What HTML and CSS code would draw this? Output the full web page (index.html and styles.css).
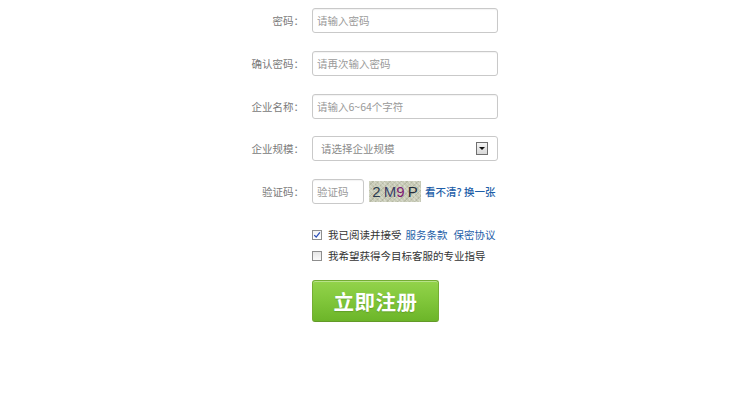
FILE: index.html
```html
<!DOCTYPE html>
<html lang="zh">
<head>
<meta charset="utf-8">
<title>注册</title>
<link rel="stylesheet" href="styles.css">
</head>
<body>
<form class="form">
  <div class="row">
    <label class="label">密码：</label>
    <input class="field" type="text" placeholder="请输入密码">
  </div>
  <div class="row">
    <label class="label">确认密码：</label>
    <input class="field" type="text" placeholder="请再次输入密码">
  </div>
  <div class="row">
    <label class="label">企业名称：</label>
    <input class="field" type="text" placeholder="请输入6~64个字符">
  </div>
  <div class="row">
    <label class="label">企业规模：</label>
    <div class="select">
      <span class="select-text">请选择企业规模</span>
      <span class="select-btn"><span class="select-arrow"></span></span>
    </div>
  </div>
  <div class="row">
    <label class="label">验证码：</label>
    <div class="captcha-line">
      <input class="field field-small" type="text" placeholder="验证码">
      <span class="captcha"><span class="c1">2</span> <span class="c2">M</span><span class="c3">9</span> <span class="c4">P</span></span>
      <a class="link link-bold" href="#">看不清? 换一张</a>
    </div>
  </div>
  <div class="checks">
    <div class="check-row">
      <span class="box checked"><svg viewBox="0 0 10 10" width="8" height="8"><path d="M1.5 5.2 L4 7.6 L8.6 1.8" fill="none" stroke="#2b4fb8" stroke-width="1.6"/></svg></span>
      <span class="check-text">我已阅读并接受</span>
      <a class="link" href="#">服务条款</a>
      <a class="link link-gap" href="#">保密协议</a>
    </div>
    <div class="check-row">
      <span class="box"></span>
      <span class="check-text">我希望获得今目标客服的专业指导</span>
    </div>
    <button class="submit" type="button">立即注册</button>
  </div>
</form>
</body>
</html>
```

FILE: styles.css
```css
html, body {
  margin: 0;
  padding: 0;
  background: #ffffff;
}
body {
  font-family: "Noto Sans CJK SC", "Liberation Sans", sans-serif;
  font-size: 10.5px;
  color: #333;
}
.form {
  display: flex;
  flex-direction: column;
  gap: 17.75px;
  padding-top: 8px;
}
.row {
  display: grid;
  grid-template-columns: 304px auto;
  column-gap: 8px;
  align-items: center;
  height: 25px;
}
.label {
  text-align: right;
  color: #7a7a7a;
  font-size: 10.5px;
}
.field {
  box-sizing: border-box;
  width: 186px;
  height: 25px;
  border: 1px solid #c9c9c9;
  border-radius: 3px;
  padding: 0 4px;
  font-family: inherit;
  font-size: 10.5px;
  color: #333;
  box-shadow: inset 0 1px 1px rgba(0,0,0,0.05);
  outline: none;
}
.field::placeholder {
  color: #9a9a9a;
}
.field-small {
  width: 52px;
}
.select {
  box-sizing: border-box;
  width: 186px;
  height: 25px;
  border: 1px solid #c9c9c9;
  border-radius: 3px;
  display: flex;
  align-items: center;
  justify-content: space-between;
  padding: 0 9px 0 8px;
}
.select-text {
  color: #8a8a8a;
}
.select-btn {
  box-sizing: border-box;
  width: 12px;
  height: 13px;
  border: 1px solid #6f6f6f;
  background: linear-gradient(#f4f4f4, #d8d8d8);
  display: flex;
  align-items: center;
  justify-content: center;
}
.select-arrow {
  width: 0;
  height: 0;
  border-left: 3px solid transparent;
  border-right: 3px solid transparent;
  border-top: 3px solid #111;
}
.captcha-line {
  display: flex;
  align-items: center;
}
.captcha {
  margin-left: 5px;
  width: 52px;
  height: 21px;
  box-sizing: border-box;
  display: block;
  text-align: center;
  line-height: 21px;
  font-family: "Liberation Sans", sans-serif;
  font-size: 15px;
  word-spacing: -1px;
  background-color: #c7cab6;
  background-image:
    repeating-linear-gradient(45deg, rgba(255,255,255,0.22) 0 1px, transparent 1px 3px),
    repeating-linear-gradient(-45deg, rgba(90,95,70,0.16) 0 1px, transparent 1px 4px),
    repeating-linear-gradient(90deg, rgba(255,255,240,0.15) 0 1px, transparent 1px 5px);
  white-space: pre;
}
.c1 { color: #2b3a4c; }
.c2 { color: #3a3f66; }
.c3 { color: #7d1a74; }
.c4 { color: #242e3c; }
.link {
  color: #1e5ea8;
  text-decoration: none;
}
.link-bold {
  margin-left: 4px;
  font-weight: 500;
}
.checks {
  display: flex;
  flex-direction: column;
  padding-left: 312px;
  margin-top: 6px;
}
.check-row {
  display: flex;
  align-items: center;
  height: 14px;
  margin-bottom: 7px;
}
.box {
  box-sizing: border-box;
  width: 10px;
  height: 10px;
  border: 1px solid #8e8e8e;
  background: linear-gradient(#e6e6e6, #fafafa);
  display: flex;
  align-items: center;
  justify-content: center;
  margin-right: 6px;
}
.box.checked {
  background: linear-gradient(#f2f2f2, #ffffff);
}
.check-text {
  color: #333;
  margin-right: 4px;
}
.link-gap {
  margin-left: 6px;
}
.submit {
  margin-top: 10px;
  box-sizing: border-box;
  width: 127px;
  height: 42px;
  border: 1px solid #74ad33;
  border-bottom-color: #639a28;
  border-radius: 3px;
  background: linear-gradient(#93d34b, #80c63a 50%, #6cb529);
  color: #ffffff;
  font-family: "Noto Sans CJK SC", sans-serif;
  font-size: 20.5px;
  font-weight: 700;
  letter-spacing: 0.5px;
  text-shadow: 0 1px 1px rgba(60,110,20,0.35);
  box-shadow: inset 0 1px 0 rgba(255,255,255,0.35);
  padding: 0;
  cursor: pointer;
}
```
